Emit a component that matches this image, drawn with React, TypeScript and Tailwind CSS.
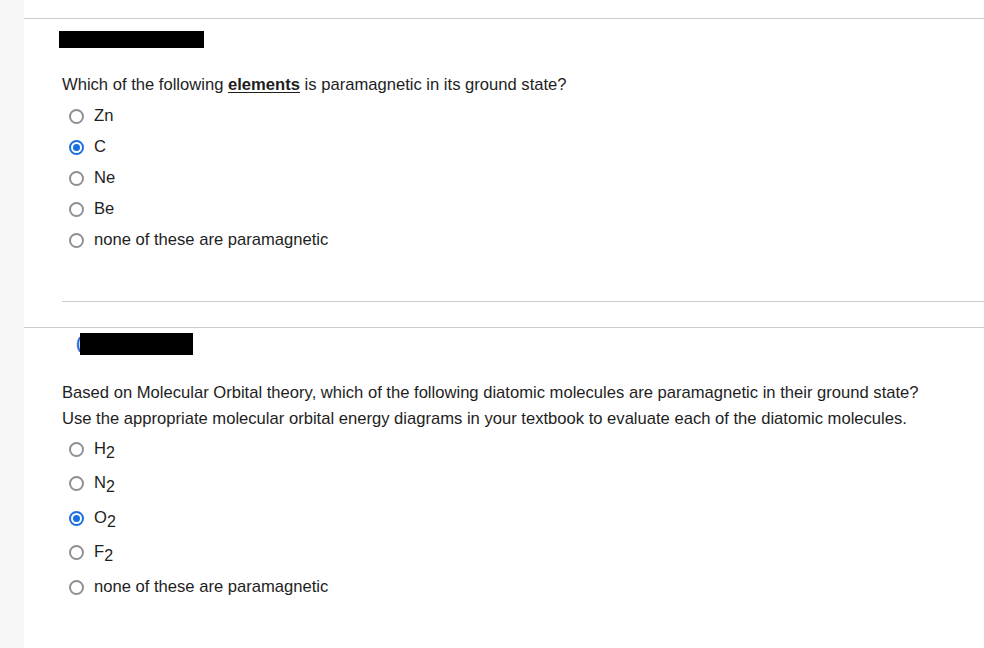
import React from 'react';

type Option = { label: React.ReactNode; checked?: boolean };

function Radio({ checked }: { checked?: boolean }) {
  if (checked) {
    return (
      <span className="w-[15px] h-[15px] rounded-full border-2 border-[#1a6fe0] flex items-center justify-center shrink-0">
        <span className="w-[7px] h-[7px] rounded-full bg-[#1a6fe0]" />
      </span>
    );
  }
  return <span className="w-[15px] h-[15px] rounded-full border-2 border-[#8f8f96] shrink-0" />;
}

function Sub({ children }: { children: React.ReactNode }) {
  return <span className="relative top-[4px] text-[16px]">{children}</span>;
}

function OptionList({ options, rowClass }: { options: Option[]; rowClass: string }) {
  return (
    <div className="flex flex-col">
      {options.map((o, i) => (
        <label key={i} className={`flex items-center gap-[10px] ${rowClass}`}>
          <Radio checked={o.checked} />
          <span>{o.label}</span>
        </label>
      ))}
    </div>
  );
}

export default function App() {
  const q1: Option[] = [
    { label: 'Zn' },
    { label: 'C', checked: true },
    { label: 'Ne' },
    { label: 'Be' },
    { label: 'none of these are paramagnetic' },
  ];

  const q2: Option[] = [
    { label: <>H<Sub>2</Sub></> },
    { label: <>N<Sub>2</Sub></> },
    { label: <>O<Sub>2</Sub></>, checked: true },
    { label: <>F<Sub>2</Sub></> },
    { label: 'none of these are paramagnetic' },
  ];

  return (
    <div className="flex w-[984px] h-[648px] bg-white text-[16.6px] text-[#1e1e1e] font-['Liberation_Sans',Arial,sans-serif] overflow-hidden">
      <div className="w-[24px] bg-[#f7f7f7] shrink-0" />
      <div className="flex-1 pt-[18px]">
        {/* Question 1 */}
        <div className="border-t border-[#cdcdcd]">
          <div className="ml-[35px] mt-[12px] w-[145px] h-[17px] bg-black" />
          <div className="pl-[38px] mt-[22px] h-[31px] flex items-center">
            <p>
              Which of the following <b className="underline underline-offset-2">elements</b> is paramagnetic in its ground state?
            </p>
          </div>
          <OptionList options={q1} rowClass="h-[31px] pl-[45px]" />
          <div className="ml-[38px] mt-[45px] border-t border-[#cdcdcd]" />
        </div>

        {/* Question 2 */}
        <div className="mt-[25px] border-t border-[#cdcdcd]">
          <div className="flex items-center mt-[5px] h-[22px] ml-[52px]">
            <span className="text-[#2a6fd6] text-[16px] font-bold leading-none -mr-[1px]">(</span>
            <div className="w-[113px] h-[22px] bg-black" />
          </div>
          <div className="pl-[38px] mt-[25px] leading-[26px]">
            <p>Based on Molecular Orbital theory, which of the following diatomic molecules are paramagnetic in their ground state?</p>
            <p>Use the appropriate molecular orbital energy diagrams in your textbook to evaluate each of the diatomic molecules.</p>
          </div>
          <div className="mt-[0px]">
            <OptionList options={q2} rowClass="h-[34.5px] pl-[45px]" />
          </div>
        </div>
      </div>
    </div>
  );
}
